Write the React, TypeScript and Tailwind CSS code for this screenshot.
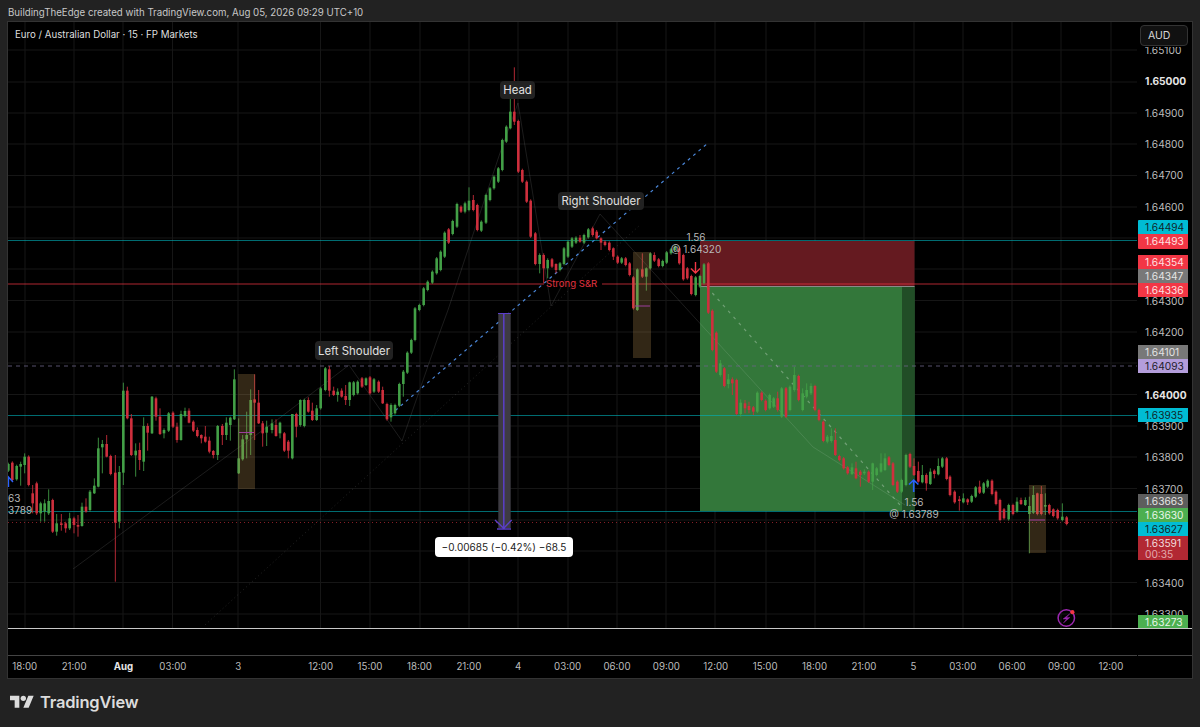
import React from "react";

type Bar = { x: number; up: boolean; t: number; b: number; wt: number; wb: number };

function seg(ox: number, oy: number, src: string): Bar[] {
  return src
    .split(",")
    .map((s) => s.trim())
    .filter(Boolean)
    .map((s) => {
      const p = s.split(/\s+/);
      const x = +p[0];
      const t = +p[2];
      const b = +p[3];
      const wt = p[4] ? +p[4] : t - 4;
      const wb = p[5] ? +p[5] : b + 4;
      return { x: ox + x / 3, up: p[1] === "g", t: oy + t / 3, b: oy + b / 3, wt: oy + wt / 3, wb: oy + wb / 3 };
    });
}

const bars: Bar[] = [
  ...seg(0, 340, `25 g 372 392, 37 r 368 420, 50 g 378 418, 62 g 372 380 365 437, 74 g 350 375 340 400, 86 r 350 435, 98 r 460 490 435 520,
  110 r 430 520 425 525, 122 g 490 520 485 545, 134 g 490 515 478 545, 146 g 483 520 448 525, 158 r 480 575, 170 g 550 575 522 587, 184 r 550 555 522 572,
  197 r 550 565 545 578, 209 g 535 565 518 570, 222 r 535 555 530 580, 234 r 555 560 525 590, 246 g 500 558 488 560, 258 r 500 515 475 518, 270 g 455 510 450 515,
  283 g 437 460 415 462, 295 g 325 440 293 442, 307 g 312 322 300 400, 320 r 312 350 285 352, 332 r 348 402, 346 r 398 548 345 725, 358 g 396 545 378 565,
  370 g 152 398 128 435, 382 r 152 235 140 238, 394 r 235 345 222 348, 407 g 332 346 310 410, 419 r 330 360 308 390, 431 g 258 365 232 393, 443 r 258 278 250 332,
  456 g 170 280 168 282, 468 r 175 230 170 242, 480 r 230 282 205 285, 492 g 270 280 265 295, 506 g 220 272, 519 r 218 260, 531 r 260 300 248 308, 543 g 222 300 212 302,
  555 g 213 228 203 232, 567 r 212 248 205 250, 580 r 245 272, 592 r 270 288 262 292, 604 r 285 295 283 310, 616 r 290 305 258 308, 628 r 302 335 290 340, 640 r 333 345 330 355,
  653 g 258 345 255 360, 667 r 258 285 252 315, 679 g 248 285 232 300, 691 g 233 255 230 302, 703 g 118 238 88 240, 716 g 355 400 235 402, 728 g 298 358 285 362,
  740 g 285 298 215 355, 752 g 180 285 148 345, 764 r 178 188 103 300, 776 r 188 250 150 252, 788 r 250 280 243 320, 800 g 260 278 242 318`),
  ...seg(270, 340, `6 g 250 270 238 280, 18 r 255 288 238 290, 30 g 248 280 245 295, 43 r 280 332, 55 r 305 332 300 355, 67 g 222 355 222 358, 79 r 222 260 218 292,
  91 g 180 255 178 260, 103 g 180 258, 115 r 180 215 172 218, 127 r 212 240 188 243, 140 g 205 240 195 243, 152 g 145 205, 166 g 85 150, 178 r 88 152 78 170, 191 r 152 165 140 168,
  203 g 155 165 145 185, 215 r 152 170 145 173, 227 r 168 180 135 195, 239 g 127 180 125 198, 251 g 127 165, 263 g 125 160, 276 r 115 140, 288 g 115 135 112 138, 300 r 112 160,
  312 g 118 155, 326 r 125 155, 338 r 150 190 140 192, 351 r 192 238, 363 g 195 232 190 245, 375 g 195 220, 388 g 132 197, 400 g 95 132 90 170, 412 g 38 98, 424 g 0 38`),
  ...seg(400, 60, `45 g 745 840, 58 g 735 750, 71 g 685 735, 83 g 665 690, 97 g 635 668, 110 g 595 640, 122 g 575 630, 134 g 518 590, 146 r 508 548, 158 g 483 522, 171 g 432 500, 183 r 440 455,
  195 g 430 455 425 460, 207 g 422 450 382 454, 220 r 420 450 405 454, 232 r 435 510, 244 g 485 512, 258 g 405 488, 270 g 385 420, 282 g 350 385, 295 g 325 365, 307 g 240 330, 319 g 200 245,
  331 g 155 205 115 208, 343 r 155 185 22 195, 355 r 183 335, 367 r 330 365, 380 r 365 425, 392 r 422 530, 406 r 520 612, 419 g 585 612 580 640, 431 r 585 625 580 670, 443 g 600 625 595 655,
  456 r 598 620, 468 r 612 630 610 640, 480 g 610 630, 492 g 565 612, 504 g 545 590, 516 g 535 560, 528 g 533 548, 540 r 533 545 525 548, 552 g 525 548, 565 g 508 532, 578 r 505 525 500 530,
  590 r 515 535 510 538, 603 r 535 548 532 570, 615 r 545 555, 628 r 548 570, 640 r 565 590 562 600, 653 r 590 608, 665 g 595 608, 677 r 595 615, 689 r 610 645`),
  ...seg(600, 220, `100 r 172 265, 112 g 148 270 145 273, 127 r 148 170 100 174, 139 g 145 170 142 212, 151 g 100 145 97 148, 163 r 105 122 97 126, 176 r 118 138, 188 g 123 138, 200 g 97 128, 213 g 88 100, 225 g 80 90,
  238 r 85 130, 250 r 105 178, 262 r 145 175, 274 r 168 222, 287 g 172 225, 300 g 168 200, 312 g 133 190, 325 r 130 278, 337 r 272 390, 349 r 338 455, 361 g 430 465 420 470, 373 r 445 498,
  385 g 478 492 462 505, 397 r 478 490 472 525, 410 r 480 582, 422 g 548 582 538 590, 435 r 550 565 540 580, 447 r 558 570 545 580, 460 r 562 575 558 585, 472 g 518 575, 485 r 518 540, 497 r 542 570, 509 g 525 565,
  521 g 535 560, 533 r 535 570 515 575, 545 g 505 590, 558 r 505 590, 570 g 500 570, 583 g 465 510 440 515, 596 r 468 540, 608 g 520 570 505 574, 620 g 510 530 490 535, 633 g 498 520 490 525, 645 r 498 570, 657 r 570 600`),
  ...seg(720, 360, `310 r 185 243, 322 g 230 245 225 250, 334 g 228 243 205 248, 346 r 240 285 205 288, 358 r 288 300, 371 r 295 325, 383 r 322 340, 396 g 322 342 310 345, 408 r 325 355 305 358,
  421 r 335 345 330 380, 433 g 335 340 328 345, 446 r 335 365, 458 g 310 365 308 390, 470 g 325 345, 483 g 310 335 280 338, 495 g 295 330 280 333, 507 r 292 315, 519 r 310 375, 532 r 365 395,
  545 g 360 395, 558 g 285 375, 570 r 282 320, 582 r 318 345 295 348, 595 r 333 365 305 368, 607 g 345 367 315 370, 619 r 345 370 340 392, 631 g 335 372 325 375, 643 r 332 342 328 355, 655 g 318 343 295 346, 667 g 295 320, 680 r 295 357`),
  ...seg(880, 440, `210 r 110 165, 224 r 155 187, 238 r 178 183 168 212, 250 g 175 187 160 190, 263 r 178 187 175 195, 275 g 168 185, 287 g 142 170, 299 r 140 158 122 162, 311 g 130 158, 323 g 122 140,
  336 r 122 162, 348 r 155 192, 360 r 180 240, 372 r 208 235, 386 g 195 238, 399 r 195 222, 411 g 185 215 172 218, 423 r 180 192 173 195, 436 g 180 195 172 198, 448 g 198 222 170 340,
  460 g 165 218 138 222, 472 r 160 222 158 226, 484 r 162 222 138 226, 496 g 195 200 160 225, 508 r 195 220, 520 r 208 228 205 232, 533 r 210 235, 547 g 230 240 190 244, 560 r 232 252 228 256`),
];

const gridY = [50, 82, 113, 144, 175.5, 207, 238, 269, 300.5, 332, 363, 394.5, 426, 457, 488.5, 520, 551, 582.5, 614];
const gridX = [25, 74, 123, 172.5, 238, 320.5, 370, 420, 469, 518, 568, 617, 666, 715, 766, 815, 864, 914, 963, 1012, 1061, 1111];

const priceRows: { label: string; major?: boolean }[] = [
  { label: "1.65100" },
  { label: "1.65000", major: true },
  { label: "1.64900" },
  { label: "1.64800" },
  { label: "1.64700" },
  { label: "1.64600" },
  { label: "" },
  { label: "" },
  { label: "1.64300" },
  { label: "1.64200" },
  { label: "" },
  { label: "1.64000", major: true },
  { label: "1.63900" },
  { label: "1.63800" },
  { label: "1.63700" },
  { label: "" },
  { label: "" },
  { label: "1.63400" },
  { label: "1.63300" },
];

const timeCells: { t: string; cls?: string }[] = [
  { t: "18:00" },
  { t: "21:00" },
  { t: "Aug", cls: "font-bold text-[#e6e6e6]" },
  { t: "03:00" },
  { t: "3", cls: "ml-[16px]" },
  { t: "12:00", cls: "ml-[33px]" },
  { t: "15:00" },
  { t: "18:00" },
  { t: "21:00" },
  { t: "4" },
  { t: "03:00" },
  { t: "06:00" },
  { t: "09:00" },
  { t: "12:00" },
  { t: "15:00" },
  { t: "18:00" },
  { t: "21:00" },
  { t: "5" },
  { t: "03:00" },
  { t: "06:00" },
  { t: "09:00" },
  { t: "12:00" },
];

function Badge({ value, cls }: { value: string; cls: string }) {
  return <div className={"w-[50px] shrink-0 pl-[7px] " + cls}>{value}</div>;
}

const cyan = "h-[14px] bg-[#00bcd4] text-[#10262a]";
const red = "h-[14px] bg-[#f23645] text-[#ffe0e0]";
const grey = "h-[14px] bg-[#787878] text-[#e4e4e4]";
const green = "h-[14px] bg-[#4caf50] text-[#e8f5e8]";

function Chart() {
  return (
    <svg viewBox="8 22 1129 606" width={1129} height={606} className="block">
      {gridY.map((y) => (
        <line key={y} x1={8} x2={1137} y1={y} y2={y} stroke="#161616" />
      ))}
      {gridX.map((x) => (
        <line key={x} x1={x} x2={x} y1={22} y2={628} stroke="#161616" />
      ))}

      <rect x={700} y={241} width={214.5} height={45} fill="#651a20" />
      <rect x={700} y={286} width={214.5} height={225} fill="#33773a" />
      <rect x={902} y={286} width={12.5} height={225} fill="#214d26" />
      <line x1={700} x2={914.5} y1={286.5} y2={286.5} stroke="#8a8a8a" />

      <polyline
        points="73,569 238,448 277,420 349,365 402,441 437,340 448,310 500,153 518,103 551,306 600,214 813,447 905,505"
        fill="none"
        stroke="#ffffff"
        strokeOpacity={0.11}
      />
      <line x1={205} y1={625} x2={640} y2={225} stroke="#ffffff" strokeOpacity={0.14} strokeDasharray="1 3" />

      <line x1={8} x2={1137} y1={240.5} y2={240.5} stroke="#00b4bc" strokeOpacity={0.6} />
      <line x1={8} x2={1137} y1={415.5} y2={415.5} stroke="#00b4bc" strokeOpacity={0.6} />
      <line x1={8} x2={1137} y1={511.5} y2={511.5} stroke="#00b4bc" strokeOpacity={0.6} />
      <line x1={8} x2={1137} y1={366} y2={366} stroke="#6b6488" strokeOpacity={0.8} strokeDasharray="4 4" />
      <line x1={8} x2={1137} y1={522.5} y2={522.5} stroke="#b22833" strokeOpacity={0.75} strokeDasharray="1 3" />
      <line x1={8} x2={544} y1={284} y2={284} stroke="#f23645" strokeOpacity={0.48} strokeWidth={1.6} />
      <line x1={602} x2={1137} y1={284} y2={284} stroke="#f23645" strokeOpacity={0.48} strokeWidth={1.6} />

      <line x1={390} y1={415} x2={708} y2={143} stroke="#4a86d8" strokeWidth={1.2} strokeDasharray="3 4" />
      <line x1={707} y1={287} x2={900} y2={505} stroke="#ffffff" strokeOpacity={0.3} strokeWidth={1.2} strokeDasharray="3 5" />

      {bars.map((b, i) => {
        const c = b.up ? "#43a047" : "#cf2f3d";
        return (
          <g key={i} fill={c}>
            <rect x={b.x - 0.5} y={b.wt} width={1} height={Math.max(0, b.wb - b.wt)} opacity={0.85} />
            <rect x={b.x - 1.3} y={b.t} width={2.6} height={Math.max(1, b.b - b.t)} />
          </g>
        );
      })}

      <g fill="#b98f52" fillOpacity={0.27}>
        <rect x={238} y={374} width={17} height={115} />
        <rect x={633} y={252} width={18} height={106} />
        <rect x={1029} y={485} width={17} height={68} />
      </g>
      <g stroke="#9c3f9c" strokeWidth={1}>
        <line x1={239} x2={254} y1={432.5} y2={432.5} />
        <line x1={635} x2={650} y1={306} y2={306} />
        <line x1={1029} x2={1045} y1={520} y2={520} />
      </g>

      <rect x={498.3} y={313} width={12.4} height={215} fill="#3d3b42" />
      <line x1={503.8} x2={503.8} y1={313} y2={528} stroke="#5b3fc8" strokeWidth={1.5} />
      <line x1={498} x2={511} y1={313.5} y2={313.5} stroke="#5b3fc8" />
      <path d="M495 520 L503.7 528.3 L511.7 520 M497 529 H511" fill="none" stroke="#5b3fc8" strokeWidth={1.4} />

      <path d="M695.5 262 V273 M691 268.5 L695.5 273 L700 268.5" fill="none" stroke="#f23645" strokeWidth={1.4} />
      <path d="M913.7 492 V480 M909 484.5 L913.7 480 L918.4 484.5" fill="none" stroke="#2962ff" strokeWidth={1.6} />
      <path d="M8.5 487 V477 L13 482" fill="none" stroke="#2962ff" strokeWidth={1.4} />

      <circle cx={1066.3} cy={618} r={8.2} fill="none" stroke="#9c27b0" strokeWidth={1.5} />
      <path d="M1070 613.6 L1063 619 H1066.6 L1063.4 623 L1070 617.4 H1066.4 Z" fill="#9c27b0" stroke="#9c27b0" strokeWidth={0.4} />
      <circle cx={1072.4} cy={612.2} r={2.1} fill="#f23645" />
    </svg>
  );
}

export default function App() {
  return (
    <div className="flex h-[727px] w-[1200px] flex-col bg-[#222222] font-['Inter','Liberation_Sans',sans-serif] text-[10px] leading-none text-[#d1d1d1]">
      <div className="flex h-[21px] shrink-0 items-center pl-2 pt-[5px] text-[9.7px] text-[#c8c8c8]">
        BuildingTheEdge created with TradingView.com, Aug 05, 2026 09:29 UTC+10
      </div>

      <div className="mx-[7px] flex h-[658px] shrink-0 flex-col border border-[#333333] bg-black">
        <div className="flex h-[606px] shrink-0">
          <div className="relative h-[606px] w-[1129px] shrink-0 overflow-hidden">
            <Chart />
            <div className="absolute left-[7px] top-[6px] text-[9.7px] leading-[13px] text-[#dedede]">Euro / Australian Dollar · 15 · FP Markets</div>

            <div className="absolute left-[492px] top-[59px] flex h-[18px] w-[35px] items-center justify-center rounded bg-[#222222] pt-[2px] text-[11.4px] text-[#e0e0e0]">Head</div>
            <div className="absolute left-[307px] top-[319px] flex h-[19px] w-[78px] items-center justify-center rounded bg-[#222222] pt-[2px] text-[11.4px] text-[#e0e0e0]">Left Shoulder</div>
            <div className="absolute left-[550px] top-[170px] flex h-[18px] w-[86px] items-center justify-center rounded bg-[#222222] pt-[2px] text-[11.4px] text-[#e0e0e0]">Right Shoulder</div>

            <div className="absolute left-[538px] top-[256px] text-[9.6px] leading-[12px] text-[#e0323f]">Strong S&amp;R</div>

            <div className="absolute left-[652px] top-[209px] flex w-[72px] flex-col items-center text-[10px] leading-[12px] text-[#b8b8b8]">
              <span>1.56</span>
              <span>@ 1.64320</span>
            </div>
            <div className="absolute left-[870px] top-[474px] flex w-[72px] flex-col items-center text-[10px] leading-[12px] text-[#b8b8b8]">
              <span>1.56</span>
              <span>@ 1.63789</span>
            </div>
            <div className="absolute left-0 top-[470px] flex flex-col text-[10px] leading-[12px] text-[#b8b8b8]">
              <span>63</span>
              <span>3789</span>
            </div>

            <div className="absolute left-[427px] top-[515px] flex h-[20px] w-[138px] items-center justify-center rounded bg-white text-[10px] text-[#222222]">−0.00685 (−0.42%) −68.5</div>
          </div>

          <div className="relative h-[606px] w-[55px] shrink-0 text-[10.2px] leading-[14px] text-[#bdbdbd]">
            <div className="flex flex-col pl-[8px] pt-[12.33px]">
              {priceRows.map((r, i) => (
                <div key={i} className={"flex h-[31.33px] shrink-0 items-center " + (r.major ? "font-bold text-[#e6e6e6]" : "")}>
                  {r.label}
                </div>
              ))}
            </div>

            <div className="absolute inset-0 flex flex-col">
              <div className="h-[25px] shrink-0 bg-black pl-[3px] pt-[3px]">
                <div className="flex h-[21px] w-[48px] items-center rounded-[4px] border border-[#333333] bg-[#111111] pl-[7px] text-[10.5px] text-[#d6d6d6]">AUD</div>
              </div>
              <div className="flex flex-col pl-px pt-[173px]">
                <Badge value="1.64494" cls={cyan + " rounded-t-[1px]"} />
                <Badge value="1.64493" cls="h-[15px] rounded-b-[1px] bg-[#f23645] text-[#ffe0e0]" />
              </div>
              <div className="flex flex-col pl-px pt-[6px]">
                <Badge value="1.64354" cls={red} />
                <Badge value="1.64347" cls={grey} />
                <Badge value="1.64336" cls={red} />
              </div>
              <div className="flex flex-col pl-px pt-[48px]">
                <Badge value="1.64101" cls={grey} />
                <Badge value="1.64093" cls="h-[14px] bg-[#b39ddb] text-[#22202a]" />
              </div>
              <div className="flex flex-col pl-px pt-[35px]">
                <Badge value="1.63935" cls={cyan} />
              </div>
              <div className="flex flex-col pl-px pt-[72px]">
                <Badge value="1.63663" cls="h-[14px] bg-[#5d5d5d] text-[#e4e4e4]" />
                <Badge value="1.63630" cls={green} />
                <Badge value="1.63627" cls={cyan} />
                <div className="h-[24px] w-[50px] bg-[#b22833] pl-[7px] text-[#f3dcdc]">
                  <div className="h-[13px]">1.63591</div>
                  <div className="h-[11px] leading-[11px] text-[#e2a8ad]">00:35</div>
                </div>
              </div>
              <div className="flex flex-col pl-px pt-[55px]">
                <Badge value="1.63273" cls="h-[13px] bg-[#4caf50] text-[#e8f5e8]" />
              </div>
            </div>
          </div>
        </div>

        <div className="h-px shrink-0 bg-[#c8c8c8]" />
        <div className="h-[26px] shrink-0" />

        <div className="flex h-px shrink-0 gap-px">
          <div className="w-[1129px] bg-[#444444]" />
          <div className="flex-1 bg-[#444444]" />
        </div>

        <div className="flex h-[23px] shrink-0 items-center pb-px text-[9.7px] text-[#bdbdbd]">
          <div className="-ml-[8px] flex">
            {timeCells.map((c, i) => (
              <div key={i} className={"w-[49.4px] shrink-0 text-center " + (c.cls ?? "")}>
                {c.t}
              </div>
            ))}
          </div>
        </div>
      </div>

      <div className="flex flex-1 items-center gap-[6px] pb-[2px] pl-[10px] text-[#dcdcdc]">
        <svg viewBox="0 0 36 28" width={24} height={18.7} fill="#dcdcdc" aria-hidden="true">
          <path d="M14 22H7V11H0V4h14v18zM28 22h-8l7.5-18h8L28 22z" />
          <circle cx={20} cy={8} r={4} />
        </svg>
        <span className="text-[16.5px] font-semibold tracking-[-0.2px]">TradingView</span>
      </div>
    </div>
  );
}
